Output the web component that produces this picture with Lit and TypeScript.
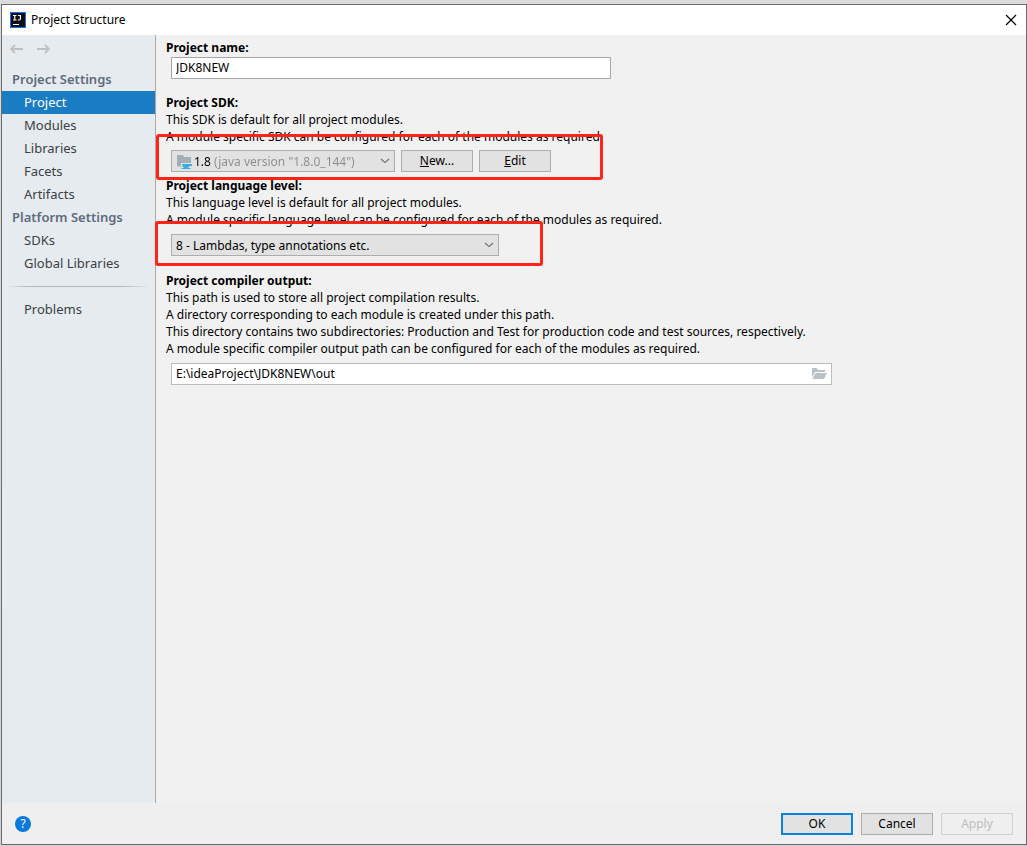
import { LitElement, html, css, svg } from "lit";
import { customElement, state } from "lit/decorators.js";

const chevron = html`<svg class="chevron" viewBox="0 0 10 6" width="10" height="6" aria-hidden="true">
  <path d="M1 1 L5 4.6 L9 1" fill="none" stroke="#6b6b6b" stroke-width="1.1" />
</svg>`;

const arrow = (d: string) => html`<svg viewBox="0 0 14 10" width="14" height="10" aria-hidden="true">
  ${svg`<path d=${d} fill="none" stroke="#c0c0c0" stroke-width="1.8" />`}
</svg>`;

interface Group {
  title: string;
  items: string[];
}

@customElement("settings-nav")
export class SettingsNav extends LitElement {
  @state() private selected = "Project";

  private groups: Group[] = [
    { title: "Project Settings", items: ["Project", "Modules", "Libraries", "Facets", "Artifacts"] },
    { title: "Platform Settings", items: ["SDKs", "Global Libraries"] },
  ];

  static styles = css`
    :host {
      display: block;
      background: #e5ebef;
      border-right: 1px solid #a9a9a9;
    }
    .history {
      display: flex;
      gap: 13px;
      padding: 9px 8px 14px;
    }
    .history button {
      display: flex;
      padding: 0;
      border: 0;
      background: none;
    }
    h2 {
      margin: 0;
      padding-left: 10px;
      font-size: 13px;
      line-height: 23px;
      font-weight: 600;
      color: #5f6b7c;
    }
    ul {
      margin: 0;
      padding: 0;
      list-style: none;
    }
    a {
      display: block;
      padding-left: 22px;
      line-height: 23px;
      color: #3c3f44;
      text-decoration: none;
    }
    a.selected {
      background: #1a7dc4;
      color: #fff;
    }
    hr {
      height: 1px;
      margin: 11px 5px;
      border: 0;
      background: linear-gradient(90deg, transparent, #b5b8bb 15%, #b5b8bb 80%, transparent);
    }
  `;

  private link(name: string) {
    return html`<li>
      <a
        href="#"
        class=${name === this.selected ? "selected" : ""}
        @click=${(e: Event) => {
          e.preventDefault();
          this.selected = name;
        }}
        >${name}</a
      >
    </li>`;
  }

  render() {
    return html`
      <div class="history">
        <button aria-label="Back" disabled>${arrow("M13 5 H1 M5 1 L1 5 L5 9")}</button>
        <button aria-label="Forward" disabled>${arrow("M0 5 H12 M8 1 L12 5 L8 9")}</button>
      </div>
      <nav>
        ${this.groups.map(
          (g) => html`<h2>${g.title}</h2>
            <ul>
              ${g.items.map((i) => this.link(i))}
            </ul>`
        )}
        <hr />
        <ul>
          ${this.link("Problems")}
        </ul>
      </nav>
    `;
  }
}

@customElement("app-root")
export class AppRoot extends LitElement {
  static styles = css`
    :host {
      display: flex;
      box-sizing: border-box;
      min-height: 100vh;
      padding: 4px 0 1px 1px;
      background: linear-gradient(180deg, #dcdcdc, #d0d3d5);
      font-family: "Noto Sans", "Open Sans", sans-serif;
      font-size: 12px;
      color: #000;
    }
    .dialog {
      flex: 1;
      display: flex;
      flex-direction: column;
      border: 1px solid #6a6a6a;
      background: #f1f1f1;
    }
    .titlebar {
      display: flex;
      align-items: center;
      gap: 5px;
      height: 30px;
      padding: 0 9px 0 8px;
      background: #fff;
    }
    .titlebar h1 {
      flex: 1;
      margin: 0;
      font-size: 12px;
      line-height: 16px;
      font-weight: 400;
    }
    .titlebar button {
      display: flex;
      padding: 0;
      border: 0;
      background: none;
    }
    .body {
      flex: 1;
      display: flex;
    }
    settings-nav {
      flex: 0 0 153px;
      font-size: 13px;
    }
    main {
      flex: 1;
      padding: 4px 10px;
    }
    section {
      line-height: 17px;
    }
    .heading {
      display: block;
      font-weight: 700;
    }
    p {
      margin: 0;
    }
    .row {
      position: relative;
      display: flex;
      gap: 6px;
      padding-left: 5px;
    }
    .name {
      margin: 1px 0 15px;
    }
    .sdk {
      margin: 5px 0;
    }
    .level {
      margin: 6px 0 16px;
    }
    .output {
      margin-top: 6px;
    }
    .field {
      box-sizing: border-box;
      display: flex;
      align-items: center;
      height: 22px;
      padding: 0 4px;
      border: 1px solid #a6a6a6;
      background: #fff;
    }
    .field input {
      flex: 1;
      min-width: 0;
      padding: 0;
      border: 0;
      outline: 0;
      background: none;
      color: inherit;
      font: inherit;
      line-height: 20px;
    }
    .name .field {
      flex: 0 1 440px;
    }
    .output .field {
      flex: 0 1 661px;
      border-color: #bcbcbc;
    }
    .field button {
      display: flex;
      padding: 0;
      border: 0;
      background: none;
    }
    .combo {
      box-sizing: border-box;
      display: flex;
      align-items: center;
      height: 22px;
      padding: 0 4px;
      border: 1px solid #adadad;
      background: #e2e2e2;
    }
    .combo select {
      flex: 1;
      min-width: 0;
      height: 20px;
      padding: 0;
      border: 0;
      outline: 0;
      appearance: none;
      background: none;
      color: inherit;
      font: inherit;
    }
    .sdk .combo {
      flex: 0 1 224px;
      gap: 1px;
    }
    .sdk .combo select {
      background: linear-gradient(90deg, #000 19px, #8c8c8c 19px);
      background-clip: text;
      -webkit-background-clip: text;
      color: transparent;
    }
    .level .combo {
      flex: 0 1 328px;
    }
    .push {
      box-sizing: border-box;
      width: 72px;
      height: 22px;
      padding: 0;
      border: 1px solid #adadad;
      background: #e2e2e2;
      color: #000;
      font: inherit;
      line-height: 20px;
    }
    .push.default {
      border: 2px solid #0a84dd;
      line-height: 18px;
    }
    .push:disabled {
      border-color: #cfcfcf;
      background: #efefef;
      color: #bdbdbd;
    }
    .mark {
      position: absolute;
      box-sizing: border-box;
      border: 3px solid #ff2416;
      border-radius: 3px;
      pointer-events: none;
    }
    .sdk .mark {
      top: -16px;
      left: -10px;
      width: 447px;
      height: 46px;
    }
    .level .mark {
      top: -13px;
      left: -11px;
      width: 388px;
      height: 45px;
    }
    footer {
      display: flex;
      align-items: center;
      gap: 8px;
      padding: 10px 13px 9px;
      background: #efefef;
    }
    .help {
      width: 16px;
      height: 16px;
      margin-right: auto;
      padding: 0;
      border: 0;
      border-radius: 50%;
      background: #0a78dc;
      color: #fff;
      font: inherit;
      line-height: 16px;
    }
  `;

  render() {
    return html`
      <div class="dialog">
        <header class="titlebar">
          <svg viewBox="0 0 16 16" width="16" height="16" aria-hidden="true">
            <rect width="16" height="16" fill="#1473e6" />
            <rect x="1" y="1" width="14" height="14" fill="#0d0d12" />
            <path
              d="M3 3.5 H6.5 M4.75 3.5 V8 M3 8 H6.5 M8 3.5 H11 M10.4 3.5 V6.8 Q10.4 8 9.2 8 H7.8"
              fill="none"
              stroke="#fff"
              stroke-width="1.2"
            />
            <rect x="3" y="12" width="6" height="1" fill="#fff" />
          </svg>
          <h1>Project Structure</h1>
          <button aria-label="Close">
            <svg viewBox="0 0 12 12" width="12" height="12" aria-hidden="true">
              <path d="M1 1 L11 11 M11 1 L1 11" stroke="#000" stroke-width="1.2" />
            </svg>
          </button>
        </header>

        <div class="body">
          <settings-nav></settings-nav>
          <main>
            <section>
              <label class="heading" for="name">Project name:</label>
              <div class="row name">
                <div class="field"><input id="name" type="text" value="JDK8NEW" /></div>
              </div>
            </section>

            <section>
              <label class="heading" for="sdk">Project SDK:</label>
              <p>This SDK is default for all project modules.</p>
              <p>A module specific SDK can be configured for each of the modules as required.</p>
              <div class="row sdk">
                <div class="combo">
                  <svg viewBox="0 0 17 16" width="17" height="16" aria-hidden="true">
                    <path d="M1 2 H6.5 L8.5 4 H15 V10 H5 V13.5 H1 Z" fill="#a3afb7" />
                    <path
                      d="M6 11 H16 V13 H13.8 Q13 14.6 11.5 15 H8.5 Q6 14 6 11 Z"
                      fill="#38b0de"
                    />
                    <rect x="5.5" y="15" width="9" height="1" fill="#38b0de" />
                  </svg>
                  <select id="sdk">
                    <option>1.8 (java version "1.8.0_144")</option>
                  </select>
                  ${chevron}
                </div>
                <button class="push"><u>N</u>ew...</button>
                <button class="push"><u>E</u>dit</button>
                <div class="mark"></div>
              </div>
            </section>

            <section>
              <label class="heading" for="level">Project language level:</label>
              <p>This language level is default for all project modules.</p>
              <p>A module specific language level can be configured for each of the modules as required.</p>
              <div class="row level">
                <div class="combo">
                  <select id="level">
                    <option>8 - Lambdas, type annotations etc.</option>
                  </select>
                  ${chevron}
                </div>
                <div class="mark"></div>
              </div>
            </section>

            <section>
              <label class="heading" for="output">Project compiler output:</label>
              <p>This path is used to store all project compilation results.</p>
              <p>A directory corresponding to each module is created under this path.</p>
              <p>
                This directory contains two subdirectories: Production and Test for production code and test sources,
                respectively.
              </p>
              <p>A module specific compiler output path can be configured for each of the modules as required.</p>
              <div class="row output">
                <div class="field">
                  <input id="output" type="text" value="E:\\ideaProject\\JDK8NEW\\out" />
                  <button aria-label="Browse">
                    <svg viewBox="0 0 16 12" width="16" height="12" aria-hidden="true">
                      <path d="M1 0 H5.5 L7 2 H14 V4 H4 L1 9.5 Z" fill="#b9c0c6" />
                      <path d="M4.5 5 H16 L13 11 H1.5 Z" fill="#b9c0c6" />
                    </svg>
                  </button>
                </div>
              </div>
            </section>
          </main>
        </div>

        <footer>
          <button class="help" aria-label="Help">?</button>
          <button class="push default">OK</button>
          <button class="push">Cancel</button>
          <button class="push" disabled>Apply</button>
        </footer>
      </div>
    `;
  }
}
